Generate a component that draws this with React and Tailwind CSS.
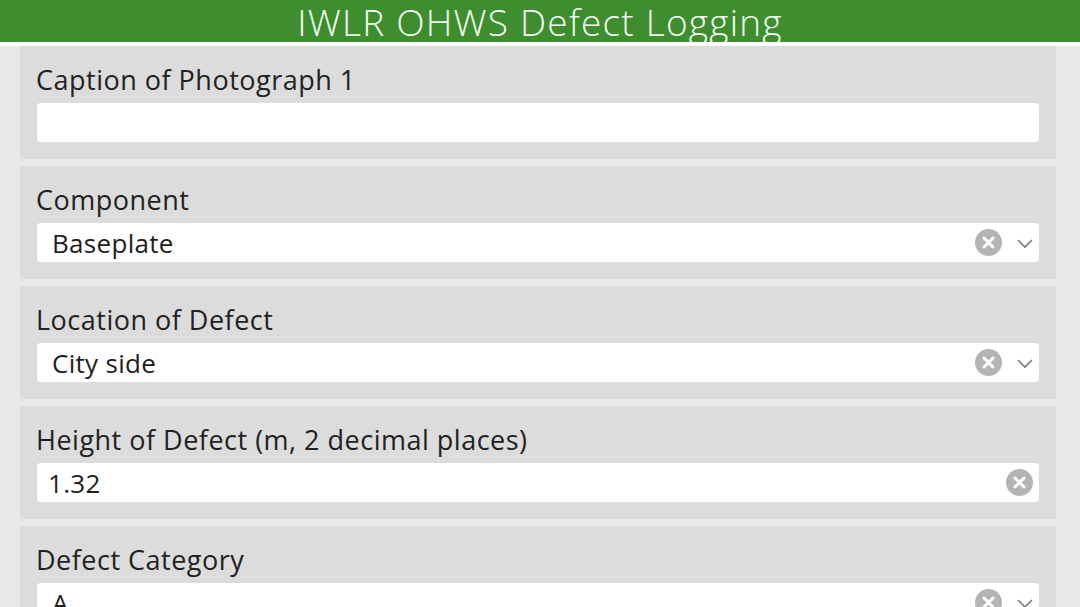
import React from 'react';

// Form fields shown on the defect logging screen
const fields = [
  { label: 'Caption of Photograph 1', value: '', kind: 'text' },
  { label: 'Component', value: 'Baseplate', kind: 'select' },
  { label: 'Location of Defect', value: 'City side', kind: 'select' },
  { label: 'Height of Defect (m, 2 decimal places)', value: '1.32', kind: 'number' },
  { label: 'Defect Category', value: 'A', kind: 'select' },
];

function ClearIcon() {
  return (
    <svg width="27" height="27" viewBox="0 0 27 27">
      <circle cx="13.5" cy="13.5" r="13.5" fill="#b4b4b4" />
      <path d="M9 9 L18 18 M18 9 L9 18" stroke="#ffffff" strokeWidth="3" strokeLinecap="round" />
    </svg>
  );
}

function Chevron() {
  return (
    <svg width="18" height="12" viewBox="0 0 18 12">
      <path d="M2 3 L9 10 L16 3" fill="none" stroke="#7a7a7a" strokeWidth="1.6" />
    </svg>
  );
}

function Field({ field }) {
  const hasValue = field.value !== '';
  return (
    <div className="bg-[#dcdcdc] pt-[17px] pb-[17px] pl-[17px] pr-[17px]">
      <div className="text-[27px] leading-[34px] text-[#222222] tracking-[0.5px] -ml-[1px]">{field.label}</div>
      <div className="mt-[6px] h-[39px] bg-white rounded-[4px] flex items-center">
        <span
          className={`flex-1 text-[26px] leading-[34px] text-[#1e1e1e] tracking-[0.3px] ${
            field.kind === 'select' ? 'pl-[15px]' : 'pl-[11px]'
          }`}
        >
          {field.value}
        </span>
        {hasValue && field.kind === 'select' && (
          <div className="flex items-center gap-[14px] pr-[5px]">
            <ClearIcon />
            <Chevron />
          </div>
        )}
        {hasValue && field.kind === 'number' && (
          <div className="flex items-center pr-[6px]">
            <ClearIcon />
          </div>
        )}
      </div>
    </div>
  );
}

export default function App() {
  return (
    <div
      className="w-[1080px] h-[607px] overflow-hidden bg-[#e8e8e8] flex flex-col"
      style={{ fontFamily: '"Open Sans", "Noto Sans", sans-serif' }}
    >
      <header className="h-[42px] bg-[#3e8d2f] flex items-center justify-center shrink-0 overflow-hidden">
        <h1 className="text-[37px] leading-[42px] font-light text-[#f2fff0] tracking-[1.2px] pt-[1px]">
          IWLR OHWS Defect Logging
        </h1>
      </header>
      <div className="h-[4px] bg-white shrink-0" />
      <div className="flex pl-[20px] pr-[24px]">
        <div className="flex-1 flex flex-col gap-[7px]">
          {fields.map((f) => (
            <Field key={f.label} field={f} />
          ))}
        </div>
      </div>
    </div>
  );
}
